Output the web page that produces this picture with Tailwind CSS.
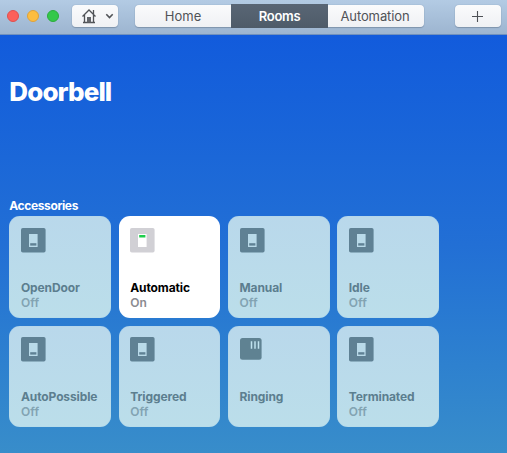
<!DOCTYPE html>
<html lang="en">
<head>
<meta charset="utf-8">
<title>Doorbell</title>
<script src="https://cdn.jsdelivr.net/npm/@tailwindcss/browser@4"></script>
</head>
<body class="w-[507px] h-[453px] overflow-hidden font-[Inter,'Liberation_Sans',sans-serif]">
<svg class="hidden">
  <symbol id="switch-off" viewBox="0 0 25 25"><rect width="24.6" height="24.6" rx="1.8" fill="#5f8194"/><rect x="8" y="6" width="8.6" height="13" fill="#b9dae9"/><rect x="9.2" y="15.2" width="6.2" height="2.4" fill="#5f8194"/></symbol>
  <symbol id="switch-on" viewBox="0 0 25 25"><rect width="24.6" height="24.6" rx="1.8" fill="#d1d0d5"/><rect x="8" y="6" width="8.6" height="13" fill="#fff"/><rect x="9.2" y="7" width="6.2" height="2.5" fill="#1fce4c"/></symbol>
  <symbol id="button" viewBox="0 0 25 25"><rect y="1" width="21.6" height="21.7" rx="2.5" fill="#5f8292"/><path d="M11.5 4.3V11.8M15 4.3V11.8M18.5 4.3V11.8" stroke="#c0e2ee" stroke-width="1.5"/></symbol>
</svg>
<div class="w-[507px] h-[453px] flex flex-col">
  <header class="h-[35px] shrink-0 flex items-start pl-[7px] pt-[5px] bg-linear-to-b from-[#b3cbe4] to-[#9db5d0] border-b border-[#7191bd]">
    <div class="flex gap-2 pt-[5px] mr-[13px]">
      <span class="size-3 rounded-full bg-[#fc605b] border border-[#df504f]"></span>
      <span class="size-3 rounded-full bg-[#fdbd41] border border-[#dea23b]"></span>
      <span class="size-3 rounded-full bg-[#34c84a] border border-[#2bac3d]"></span>
    </div>
    <button class="w-[46px] h-[22px] shrink-0 rounded-[4px] bg-linear-to-b from-[#fafbfc] to-[#eff1f4] shadow-[0_0_1px_#738ba5,0_1px_1px_#8095ad]">
      <svg class="w-[46px] h-[22px]" viewBox="0 0 46 22" fill="none" stroke="#505357"><path d="M10.5 11.5L17 5L23.5 11.5M12.5 10V17.5M21.5 10V17.5M11 17.5H23M21.5 5V9" stroke-width="1.3"/><path d="M15 12h4v5.5h-4z" fill="#62656a" stroke="none"/><path d="M34.3 9.3L37.5 12.5L40.7 9.3" stroke-width="1.6"/></svg>
    </button>
    <div class="ml-[17px] w-[289px] h-[22px] shrink-0 flex text-[13px] leading-[23px] text-center text-[#505357]">
      <span class="w-[96px] rounded-l-[4px] bg-linear-to-b from-[#fafbfc] to-[#eff1f4] shadow-[0_0_1px_#738ba5,0_1px_1px_#8095ad]">Home</span>
      <span class="w-[97px] -mt-px h-[24px] leading-[25px] bg-linear-to-b from-[#596675] to-[#4e5b69] text-white font-semibold tracking-[-0.3px] relative">Rooms</span>
      <span class="w-[96px] pr-[2px] rounded-r-[4px] bg-linear-to-b from-[#fafbfc] to-[#eff1f4] tracking-[-0.1px] shadow-[0_0_1px_#738ba5,0_1px_1px_#8095ad]">Automation</span>
    </div>
    <button class="ml-[31px] w-[46px] h-[22px] shrink-0 rounded-[4px] bg-linear-to-b from-[#fafbfc] to-[#eff1f4] shadow-[0_0_1px_#738ba5,0_1px_1px_#8095ad]">
      <svg class="w-[46px] h-[22px]" viewBox="0 0 46 22" stroke="#4e5156" stroke-width="1.1"><path d="M17 11.5H28M22.5 6V17"/></svg>
    </button>
  </header>
  <main class="grow pl-[9.3px] bg-linear-to-b from-[#125bdc] via-[#226fd5] to-[#388dca]">
    <h1 class="pt-[40px] h-[163px] text-[26px] leading-[34px] font-extrabold text-white tracking-[-0.9px]">Doorbell</h1>
    <h2 class="h-[18.3px] leading-[15px] text-[12px] font-bold text-white tracking-[-0.38px]">Accessories</h2>
    <div id="tiles" class="grid grid-cols-[repeat(4,101.7px)] auto-rows-[101.7px] gap-[7.6px]"></div>
  </main>
</div>
<script>
const tiles = [
  ['OpenDoor', 'Off', 'switch-off'], ['Automatic', 'On', 'switch-on'], ['Manual', 'Off', 'switch-off'], ['Idle', 'Off', 'switch-off'],
  ['AutoPossible', 'Off', 'switch-off'], ['Triggered', 'Off', 'switch-off'], ['Ringing', '', 'button'], ['Terminated', 'Off', 'switch-off']
];
document.getElementById('tiles').innerHTML = tiles.map(([name, state, icon]) => {
  const on = state === 'On';
  return `<article class="rounded-[11px] pl-[11.7px] pt-[11.7px] whitespace-nowrap ${on ? 'bg-white' : 'bg-linear-to-b from-[#b9d8eb] to-[#bbdeea] shadow-[inset_0_0_1px_#9dccea]'}">
    <svg class="size-[25px]"><use href="#${icon}"/></svg>
    <div class="mt-[27px] h-[15px] leading-[15px] text-[12px] font-bold tracking-[-0.12px] ${on ? 'text-black' : 'text-[#5c7e8f]'}">${name}</div>
    <div class="leading-[15px] text-[12px] font-semibold ${on ? 'text-[#8b8b90]' : 'text-[#82a3b2]'}">${state}</div>
  </article>`;
}).join('');
</script>
</body>
</html>
